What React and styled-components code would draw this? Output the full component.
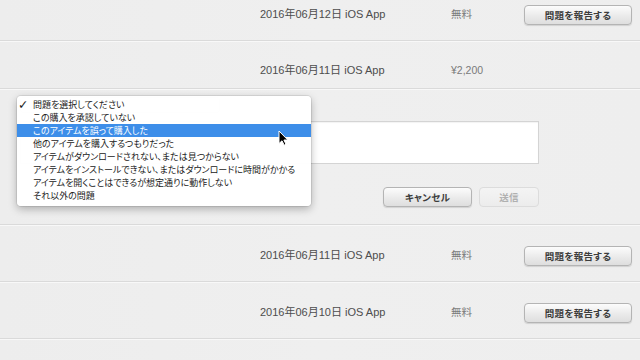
import React from "react";
import styled, { createGlobalStyle } from "styled-components";

const purchases = [
  { date: "2016年06月12日", kind: "iOS App", price: "無料", report: true, first: true },
  { date: "2016年06月11日", kind: "iOS App", price: "¥2,200", report: false, open: true },
  { date: "2016年06月11日", kind: "iOS App", price: "無料", report: true },
  { date: "2016年06月10日", kind: "iOS App", price: "無料", report: true },
  { date: "2016年06月09日", kind: "iOS App", price: "無料", report: true },
];

const problems = [
  "問題を選択してください",
  "この購入を承認していない",
  "このアイテムを誤って購入した",
  "他のアイテムを購入するつもりだった",
  "アイテムがダウンロードされない、または見つからない",
  "アイテムをインストールできない、またはダウンロードに時間がかかる",
  "アイテムを開くことはできるが想定通りに動作しない",
  "それ以外の問題",
];

const GlobalStyle = createGlobalStyle`
  html, body {
    margin: 0;
    background: #eeeeee;
  }
  body {
    font-family: "Liberation Sans", "Noto Sans CJK JP", sans-serif;
    -webkit-font-smoothing: antialiased;
  }
`;

export default function App() {
  return (
    <>
      <GlobalStyle />
      <Page>
        {purchases.map((item, index) => (
          <React.Fragment key={index}>
            <Row $first={item.first} $compact={!item.report}>
              <DateText>
                {item.date} {item.kind}
              </DateText>
              <Price>{item.price}</Price>
              {item.report && <MacButton>問題を報告する</MacButton>}
            </Row>
            {item.open && (
              <ReportForm>
                {/* メニューの下に隠れているセレクト */}
                <Select />
                <Comment />
                <Actions>
                  <MacButton $wide>キャンセル</MacButton>
                  <MacButton $disabled $small>
                    送信
                  </MacButton>
                </Actions>
              </ReportForm>
            )}
          </React.Fragment>
        ))}

        {/* ポップアップメニュー */}
        <Menu>
          {problems.map((label, index) => (
            <MenuItem key={index} $active={index === 2}>
              <Check>{index === 0 ? "✓" : ""}</Check>
              {label}
            </MenuItem>
          ))}
        </Menu>

        <Cursor width="11" height="16" viewBox="0 0 11 16">
          <path
            d="M1 1 L1 13.5 L4 10.8 L6.2 15.2 L8 14.3 L5.9 10 L9.8 10 Z"
            fill="#000"
            stroke="#fff"
            strokeWidth="1"
            strokeLinejoin="round"
          />
        </Cursor>
      </Page>
    </>
  );
}

const Page = styled.div`
  position: relative;
  width: 640px;
  height: 360px;
  overflow: hidden;
  background: linear-gradient(90deg, #ededed 0%, #efefef 50%, #eeeeee 100%);
`;

const Row = styled.div`
  display: grid;
  grid-template-columns: 191px 73px 108px;
  align-items: center;
  padding: ${(p) => (p.$compact ? "21px 0 8px 260px" : "21px 0 15px 260px")};
  margin-top: ${(p) => (p.$first ? "-16px" : "0")};
  border-bottom: 1px solid #dadada;
  box-shadow: 0 1px 0 #f8f8f8;
  min-height: ${(p) => (p.$compact ? "18px" : "20px")};
`;

const DateText = styled.span`
  font-size: 11px;
  color: #4d4d4d;
  line-height: 18px;
  margin-top: -2px;
`;

const Price = styled.span`
  font-size: 10.5px;
  color: #7a7a7a;
  line-height: 18px;
  margin-top: -2px;
`;

const MacButton = styled.button`
  box-sizing: border-box;
  height: 20px;
  width: ${(p) => (p.$wide ? "89px" : p.$small ? "60px" : "108px")};
  padding: 0;
  border-radius: 4px;
  border: 1px solid ${(p) => (p.$disabled ? "#dcdcdc" : "#b4b4b4")};
  background: ${(p) =>
    p.$disabled
      ? "linear-gradient(#f4f4f4, #ececec)"
      : "linear-gradient(#fcfcfc, #e9e9e9 60%, #dedede)"};
  box-shadow: ${(p) =>
    p.$disabled ? "none" : "0 1px 1px rgba(0, 0, 0, 0.12)"};
  font-family: "Noto Sans CJK JP", sans-serif;
  font-size: 9.5px;
  font-weight: 700;
  color: ${(p) => (p.$disabled ? "#b0b0b0" : "#3c3c3c")};
  font-feature-settings: "palt";
  letter-spacing: 0.3px;
`;

const ReportForm = styled.div`
  display: flex;
  flex-direction: column;
  padding: 8px 101px 17px 20px;
  border-bottom: 1px solid #dadada;
  box-shadow: 0 1px 0 #f8f8f8;
`;

const Select = styled.div`
  box-sizing: border-box;
  height: 16px;
  width: 200px;
  border: 1px solid #c8c8c8;
  border-radius: 3px;
  background: linear-gradient(#fdfdfd, #ececec);
`;

const Comment = styled.div`
  margin-top: 8px;
  height: 41px;
  background: #fff;
  border: 1px solid #d4d4d4;
  box-shadow: inset 0 1px 1px rgba(0, 0, 0, 0.05);
`;

const Actions = styled.div`
  display: flex;
  justify-content: flex-end;
  gap: 7px;
  margin-top: 23px;
`;

const Menu = styled.div`
  position: absolute;
  left: 17px;
  top: 96px;
  width: 294px;
  box-sizing: border-box;
  padding: 2px 0 4px;
  background: rgba(255, 255, 255, 0.98);
  border-radius: 4px;
  box-shadow: 0 0 0 1px rgba(0, 0, 0, 0.08), 0 3px 9px rgba(0, 0, 0, 0.28);
`;

const MenuItem = styled.div`
  display: flex;
  align-items: center;
  height: 13px;
  font-family: "Noto Sans CJK JP", sans-serif;
  font-size: 9px;
  font-feature-settings: "palt";
  color: ${(p) => (p.$active ? "#fff" : "#222")};
  background: ${(p) => (p.$active ? "#3d8ee9" : "transparent")};
  white-space: nowrap;
`;

const Check = styled.span`
  width: 16px;
  padding-left: 1px;
  box-sizing: border-box;
  font-family: "DejaVu Sans", sans-serif;
  font-size: 12.5px;
  font-weight: bold;
  line-height: 13px;
  color: #1a1a1a;
`;

const Cursor = styled.svg`
  position: absolute;
  left: 278px;
  top: 130px;
`;
